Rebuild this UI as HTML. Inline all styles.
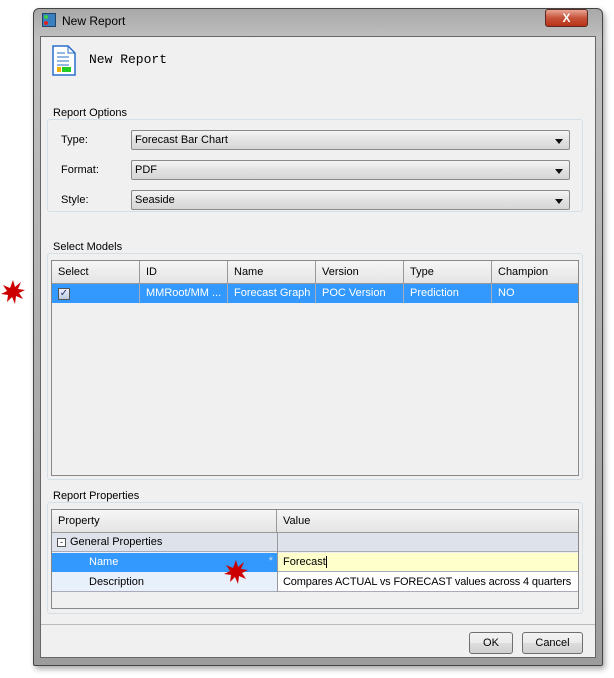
<!DOCTYPE html><html><head><style>
*{margin:0;padding:0;box-sizing:border-box}
body{width:614px;height:678px;background:#fff;position:relative;font-family:"Liberation Sans",sans-serif;font-size:11px;color:#000;overflow:hidden}
.a{position:absolute;white-space:nowrap}
.frame{left:33px;top:8px;width:570px;height:658px;background:linear-gradient(#a8a8a8,#c0c0c0 30px,#9c9c9c);border:1px solid #444;border-radius:6px 6px 2px 2px;box-shadow:2px 3px 6px rgba(0,0,0,.35)}
.client{left:40px;top:36px;width:556px;height:622px;background:#f0f0f0;border:1px solid #666}
.grp{border:1px solid #d5dfe5;border-radius:3px}
.lbl{background:#f0f0f0;padding:0 1px}
.combo{left:131px;width:439px;height:20px;border:1px solid #8a8a8a;background:linear-gradient(#f4f4f4,#e2e2e2 50%,#d6d6d6);padding:3px 3px;border-radius:2px}
.combo:after{content:"";position:absolute;right:6px;top:8px;border:4px solid transparent;border-top:5px solid #111;border-bottom:0}
.tbl{border:1px solid #888;background:#f0f0f0}
.hd{background:linear-gradient(#f6f6f6,#e4e4e4);border-right:1px solid #999;border-bottom:1px solid #999;height:23px;padding:5px 6px}
.cell{height:19px;padding:3px 6px;border-right:1px solid #aab;overflow:hidden;white-space:nowrap}
.btn{height:22px;border:1px solid #707070;border-radius:3px;background:linear-gradient(#f2f2f2,#ebebeb 50%,#dddddd 51%,#cfcfcf);text-align:center;padding-top:4px}
</style></head><body>
<div class="a frame"></div>
<div class="a" style="left:42px;top:13px;width:14px;height:14px;background:#3a7fc0;border:1px solid #246"></div>
<div class="a" style="left:44px;top:15px;width:4px;height:4px;background:#4c4;border-radius:2px"></div>
<div class="a" style="left:44px;top:21px;width:4px;height:4px;background:#d22;border-radius:2px"></div>
<div class="a" style="left:62px;top:14px;font-size:12px">New Report</div>
<div class="a" style="left:545px;top:9px;width:43px;height:18px;border:1px solid #5a2a22;border-radius:3px;background:linear-gradient(#e8a595,#c7523a 50%,#b83218);color:#fff;font-weight:bold;text-align:center;font-size:12px;line-height:16px">X</div>
<div class="a client"></div>
<svg class="a" style="left:52px;top:45px" width="26" height="32"><path d="M1 1H16L23 8V30H1Z" fill="#fff" stroke="#2a6fc9" stroke-width="1.5"/><path d="M16 1V8H23" fill="none" stroke="#2a6fc9"/><path d="M5 8H13M5 12H17M5 16H17M5 20H17" stroke="#2a6fc9"/><rect x="5" y="22" width="4" height="5" fill="#f0b000"/><rect x="10" y="22" width="9" height="5" fill="#2c2"/></svg>
<div class="a" style="left:89px;top:52px;font-family:'Liberation Mono',monospace;font-size:13px">New Report</div>

<div class="a grp" style="left:47px;top:119px;width:536px;height:93px"></div>
<div class="a lbl" style="left:52px;top:107px">Report Options</div>
<div class="a" style="left:61px;top:134px">Type:</div>
<div class="a" style="left:61px;top:164px">Format:</div>
<div class="a" style="left:61px;top:194px">Style:</div>
<div class="a combo" style="top:130px">Forecast Bar Chart</div>
<div class="a combo" style="top:160px">PDF</div>
<div class="a combo" style="top:190px">Seaside</div>

<div class="a grp" style="left:47px;top:253px;width:536px;height:227px"></div>
<div class="a lbl" style="left:52px;top:241px">Select Models</div>
<div class="a tbl" style="left:51px;top:260px;width:528px;height:216px"></div>
<div class="a" style="left:52px;top:261px;display:flex">
<div class="hd" style="width:88px">Select</div><div class="hd" style="width:88px">ID</div><div class="hd" style="width:88px">Name</div><div class="hd" style="width:88px">Version</div><div class="hd" style="width:88px">Type</div><div class="hd" style="width:86px;border-right:0">Champion</div></div>
<div class="a" style="left:52px;top:284px;width:526px;height:19px;background:#3399ff;color:#fff;display:flex">
<div class="cell" style="width:88px"><span style="display:inline-block;width:12px;height:12px;background:linear-gradient(#eef,#bcd);border:1px solid #555;color:#236;font-size:10px;line-height:10px;text-align:center">✓</span></div><div class="cell" style="width:88px">MMRoot/MM ...</div><div class="cell" style="width:88px">Forecast Graph</div><div class="cell" style="width:88px">POC Version</div><div class="cell" style="width:88px">Prediction</div><div class="cell" style="width:86px;border:0">NO</div></div>

<div class="a grp" style="left:47px;top:502px;width:536px;height:112px"></div>
<div class="a lbl" style="left:52px;top:490px">Report Properties</div>
<div class="a tbl" style="left:51px;top:509px;width:528px;height:100px"></div>
<div class="a" style="left:52px;top:510px;display:flex"><div class="hd" style="width:225px">Property</div><div class="hd" style="width:301px;border-right:0">Value</div></div>
<div class="a" style="left:52px;top:533px;width:526px;height:19px;background:#dde2eb;border-bottom:1px solid #aab"></div>
<div class="a" style="left:277px;top:533px;width:1px;height:59px;background:#999"></div>
<div class="a" style="left:57px;top:538px;width:9px;height:9px;border:1px solid #555;background:#fff;font-size:9px;line-height:6px;text-align:center">-</div>
<div class="a" style="left:70px;top:536px">General Properties</div>
<div class="a" style="left:52px;top:553px;width:225px;height:19px;background:#3399ff;color:#fff;padding:3px 0 0 37px">Name<span style="position:absolute;right:4px;top:2px;color:#cde">*</span></div>
<div class="a" style="left:278px;top:553px;width:300px;height:19px;background:#ffffcc;padding:3px 5px;border-bottom:1px solid #aab">Forecast<span style="border-left:1px solid #000;margin-left:0"></span></div>
<div class="a" style="left:52px;top:572px;width:225px;height:20px;background:#e8f0fc;padding:4px 0 0 37px;border-bottom:1px solid #aab">Description</div>
<div class="a" style="left:278px;top:572px;width:300px;height:20px;background:#fff;padding:4px 5px;border-bottom:1px solid #aab;overflow:hidden;letter-spacing:-0.15px">Compares ACTUAL vs FORECAST values across 4 quarters</div>

<div class="a" style="left:41px;top:624px;width:554px;height:1px;background:#bbb"></div>
<div class="a btn" style="left:469px;top:632px;width:44px">OK</div>
<div class="a btn" style="left:522px;top:632px;width:61px">Cancel</div>

<svg class="a" style="left:1px;top:279px" width="24" height="26"><path d="M12 1L14 8 20 3 17 10 24 11 18 14 22 20 15 17 14 25 11 18 6 23 7 16 0 15 6 12 2 6 9 9Z" fill="#c00"/></svg>
<svg class="a" style="left:224px;top:559px" width="24" height="26"><path d="M12 1L14 8 20 3 17 10 24 11 18 14 22 20 15 17 14 25 11 18 6 23 7 16 0 15 6 12 2 6 9 9Z" fill="#c00"/></svg>
</body></html>
